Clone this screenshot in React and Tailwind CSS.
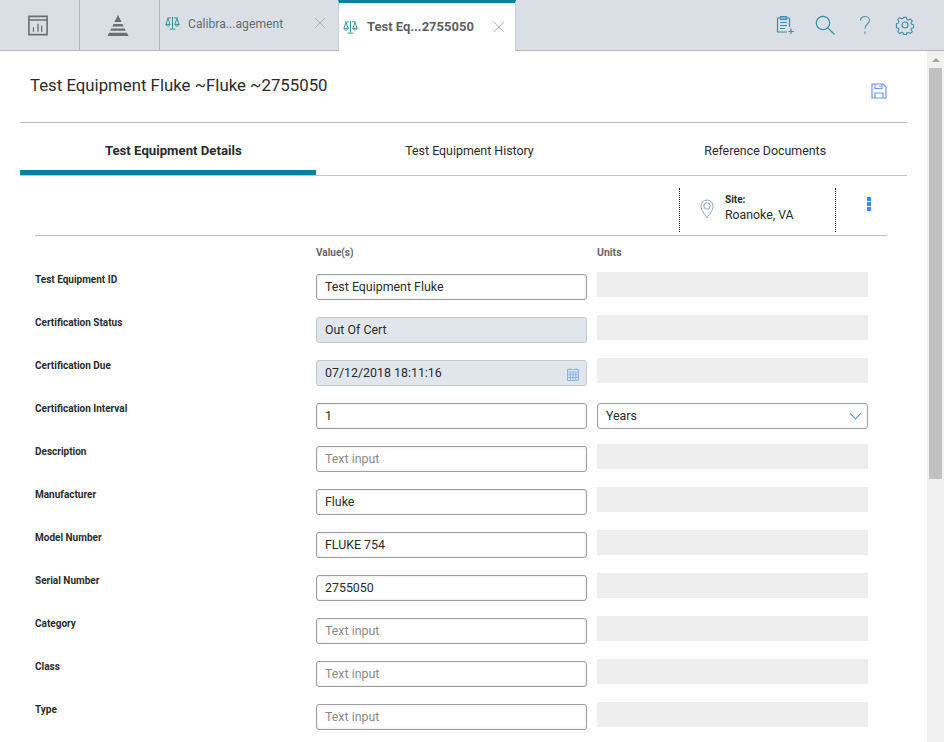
import React from "react";

const Scale = ({ className = "" }) => (
  <svg viewBox="0 0 16 16" className={className} fill="none" stroke="#2f8f95" strokeWidth="1">
    <path d="M8 1.500v12.500M5 14.500h6M2.500 2.500h4M9.500 2.500h4M1 9.500 3.200 3l2.300 6.500M10.500 9.500 12.800 3 15 9.500M1 9.500c.4 2.400 4.100 2.400 4.500 0ZM10.500 9.500c.4 2.400 4.100 2.400 4.500 0Z" />
  </svg>
);
const X = ({ className = "" }) => (
  <svg viewBox="0 0 12 12" className={className} fill="none" stroke="#b4b8bc" strokeWidth="1"><path d="M1 1l10 10M11 1 1 11" /></svg>
);

const rows = [
  ["Test Equipment ID", "Test Equipment Fluke", "input"],
  ["Certification Status", "Out Of Cert", "locked"],
  ["Certification Due", "07/12/2018 18:11:16", "date"],
  ["Certification Interval", "1", "input", "Years"],
  ["Description", "Text input", "ph"],
  ["Manufacturer", "Fluke", "input"],
  ["Model Number", "FLUKE 754", "input"],
  ["Serial Number", "2755050", "input"],
  ["Category", "Text input", "ph"],
  ["Class", "Text input", "ph"],
  ["Type", "Text input", "ph"],
];

function Field({ value, kind }) {
  const locked = kind === "locked" || kind === "date";
  return (
    <div className={`relative flex h-[26px] w-[271px] items-center rounded-[3px] border pl-[8px] text-[12.4px] ${locked ? "border-[#c3c9d0] bg-[#e1e6ec]" : "border-[#9a9fa3] bg-white shadow-[inset_0_0_3px_rgba(0,0,0,0.12)]"} ${kind === "ph" ? "text-[#8a8a8a]" : "text-[#2b2b2b]"}`}>
      {value}
      {kind === "date" && (
        <svg viewBox="0 0 14 14" className="absolute right-[6px] top-[6px] h-[14px] w-[14px]" fill="none" stroke="#8db4ee" strokeWidth="1">
          <path d="M1.500 2.500h11v11h-11zM1.500 5h11M1.500 7.700h11M1.500 10.500h11M4.300 5v8.500M7 5v8.500M9.800 5v8.500M4 1v2M10 1v2" />
        </svg>
      )}
    </div>
  );
}

export default function App() {
  return (
    <div className="flex h-[742px] w-[944px] flex-col overflow-hidden bg-white font-['Roboto','Noto_Sans',sans-serif] text-[#2b2b2b]">
      <header className="flex h-[51px] shrink-0 border-b border-[#b3b6b9] bg-[#d9dfe5]">
        <div className="flex h-[50px] w-[80px] items-center justify-center border-r border-[#b3b6b9] pr-[4px]">
          <svg viewBox="0 0 22 22" className="h-[21px] w-[20px]" fill="none" stroke="#6d6f70" strokeWidth="1.800">
            <path d="M1 1h20v20H1zM1 5h20" />
            <path d="M6 18v-5M11 18V9M15 18v-7" strokeWidth="1.400" />
          </svg>
        </div>
        <div className="flex h-[50px] w-[80px] items-center justify-center border-r border-[#b3b6b9] pr-[4px]">
          <svg viewBox="0 0 24 23" className="h-[23px] w-[24px]" fill="#6d6f70">
            <path d="M12 1l3.600 7H8.400zM7.500 10h9l1.200 2.400H6.300zM5.300 14.400h13.400l1.200 2.400H4.100zM3.100 18.800h17.800l1.600 3.200H1.500z" />
          </svg>
        </div>
        <div className="flex h-[50px] w-[178px] items-center pl-[5px] text-[12.2px] text-[#6a6d70]">
          <Scale className="h-[16px] w-[15px] -translate-y-[2px]" />
          <span className="ml-[8px] -translate-y-[1px]">Calibra...agement</span>
          <X className="ml-auto mr-[12px] h-[12px] w-[12px] -translate-y-[2px]" />
        </div>
        <div className="flex h-[51px] w-[178px] items-center border-x border-[#c9ced3] border-t-[3px] border-t-[#06829d] bg-white pl-[4px] text-[13px] font-bold text-[#5c5f62]">
          <Scale className="h-[16px] w-[15px]" />
          <span className="ml-[9px]">Test Eq...2755050</span>
          <X className="ml-auto mr-[10px] h-[12px] w-[12px]" />
        </div>
        <div className="ml-auto flex h-[50px] items-center gap-[20px] pr-[29px]">
          <svg viewBox="0 0 20 20" className="h-[20px] w-[20px]" fill="none" stroke="#3f8fb0" strokeWidth="1.200">
            <path d="M12 17H2.500V3H14.500V12M5.500 1.500h6V4.500h-6zM5 7.500h7M5 10.500h7M5 13.500h5M16 13.500v5.500M13.500 16.500h5.500" />
          </svg>
          <svg viewBox="0 0 20 20" className="h-[20px] w-[20px]" fill="none" stroke="#3f8fb0" strokeWidth="1.200">
            <circle cx="8" cy="8" r="6.700" /><path d="M12.800 12.800 19.500 19.500" />
          </svg>
          <svg viewBox="0 0 20 20" className="h-[20px] w-[20px]" fill="none" stroke="#5f93ab" strokeWidth="1.200">
            <path d="M5.500 5.500C5.500 3 7.500 1.500 10 1.500s4.500 1.700 4.500 4c0 3.500-4.500 3.700-4.500 8M10 16.500v2.200" />
          </svg>
          <svg viewBox="0 0 20 20" className="h-[20px] w-[20px]" fill="none" stroke="#3f8fb0" strokeWidth="1.200">
            <circle cx="10" cy="10" r="3" />
            <path d="M8.400 1.500h3.200l.5 2.500 1.600.7 2.200-1.400 2.200 2.200-1.400 2.200.7 1.600 2.100.5v3.200l-2.100.5-.7 1.600 1.400 2.200-2.200 2.200-2.200-1.400-1.600.7-.5 1.900H8.400l-.5-1.900-1.600-.7-2.200 1.400-2.200-2.200 1.400-2.200-.7-1.600-2.100-.5V8.400l2.100-.5.700-1.600-1.400-2.200 2.200-2.200 2.200 1.400 1.600-.7z" transform="translate(1 1) scale(.9)" />
          </svg>
        </div>
      </header>

      <div className="flex min-h-0 flex-1">
        <main className="min-w-0 flex-1 pl-[20px] pr-[20px]">
          <div className="flex h-[72px] items-start border-b border-[#bfbfbf] pl-[10px]">
            <h1 className="mt-[22px] text-[16.8px] leading-6 font-normal text-[#2b2b2b]">Test Equipment Fluke ~Fluke ~2755050</h1>
            <svg viewBox="0 0 16 16" className="ml-auto mr-[20px] mt-[32px] h-[16px] w-[16px]" fill="none" stroke="#6f97ee" strokeWidth="1.200">
              <path d="M1 1h11l3 3v11H1zM4 1v4.500h7V1M9 2.500v1.500M4 15v-5h8v5" />
            </svg>
          </div>
          <div className="grid h-[53px] grid-cols-3 border-b border-[#c4c4c4] text-[12.4px]">
            <div className="flex h-[52px] items-center justify-center border-b-[5px] border-[#06829d] pl-[11px] pt-[8px] text-[13.2px] font-bold">Test Equipment Details</div>
            <div className="flex h-[52px] items-center justify-center pl-[12px] pt-[5px]">Test Equipment History</div>
            <div className="flex h-[52px] items-center justify-center pl-[12px] pt-[5px]">Reference Documents</div>
          </div>

          <div className="ml-[15px] mr-[20px]">
            <div className="flex h-[60px] items-start justify-end border-b border-[#bfbfbf] pt-[12px]">
              <div className="flex h-[44px] w-[157px] border-x border-dotted border-[#222] pl-[20px]">
                <svg viewBox="0 0 14 20" className="mt-[11px] h-[20px] w-[14px]" fill="none" stroke="#8aa6c4" strokeWidth="1">
                  <path d="M7 19C4.500 14.500 1 11.500 1 7a6 6 0 0 1 12 0c0 4.500-3.500 7.500-6 12Z" /><circle cx="7" cy="7" r="3.200" />
                </svg>
                <div className="ml-[11px] mt-[5px]">
                  <div className="text-[10px] leading-[14px] font-bold">Site:</div>
                  <div className="text-[12.3px] leading-[16px]">Roanoke, VA</div>
                </div>
              </div>
              <div className="flex w-[51px] justify-end pr-[16px] pt-[9px]">
                <div className="flex flex-col gap-[1px]">
                  <span className="h-[4px] w-[4px] bg-[#3f86f0]" /><span className="h-[4px] w-[4px] bg-[#3f86f0]" /><span className="h-[4px] w-[4px] bg-[#3f86f0]" />
                </div>
              </div>
            </div>

            <div className="flex h-[36px] items-center pb-[4px] text-[10px] font-bold text-[#666]">
              <span className="ml-[281px] w-[281px]">Value(s)</span>
              <span className="pt-[1px] text-[10.5px]">Units</span>
            </div>

            <div className="flex flex-col">
              {rows.map(([label, value, kind, unit]) => (
                <div key={label} className="flex h-[43px] shrink-0">
                  <div className="w-[281px] pt-[1px] text-[10px] leading-[14px] font-bold">{label}</div>
                  <div className="pt-[2px]"><Field value={value} kind={kind} /></div>
                  {unit ? (
                    <div className="ml-[10px] mt-[2px] flex h-[26px] w-[271px] items-center justify-between rounded-[3px] border border-[#9aa7b3] bg-white pl-[8px] pr-[5px] text-[12.4px] shadow-[inset_0_0_3px_rgba(0,0,0,0.1)]">
                      {unit}
                      <svg viewBox="0 0 14 8" className="h-[8px] w-[13px]" fill="none" stroke="#5b8fc0" strokeWidth="1.100"><path d="M1 1l6 6 6-6" /></svg>
                    </div>
                  ) : (
                    <div className="ml-[10px] h-[25px] w-[271px] bg-[#eeeeee]" />
                  )}
                </div>
              ))}
            </div>
          </div>
        </main>

        <aside className="flex w-[17px] shrink-0 flex-col items-center bg-[#f1f1f1]">
          <div className="flex h-[17px] w-full items-center justify-center">
            <span className="h-0 w-0 border-x-[4px] border-b-[4px] border-x-transparent border-b-[#a3a3a3]" />
          </div>
          <div className="ml-[-1px] h-[411px] w-[13px] bg-[#c1c1c1]" />
        </aside>
      </div>
    </div>
  );
}
